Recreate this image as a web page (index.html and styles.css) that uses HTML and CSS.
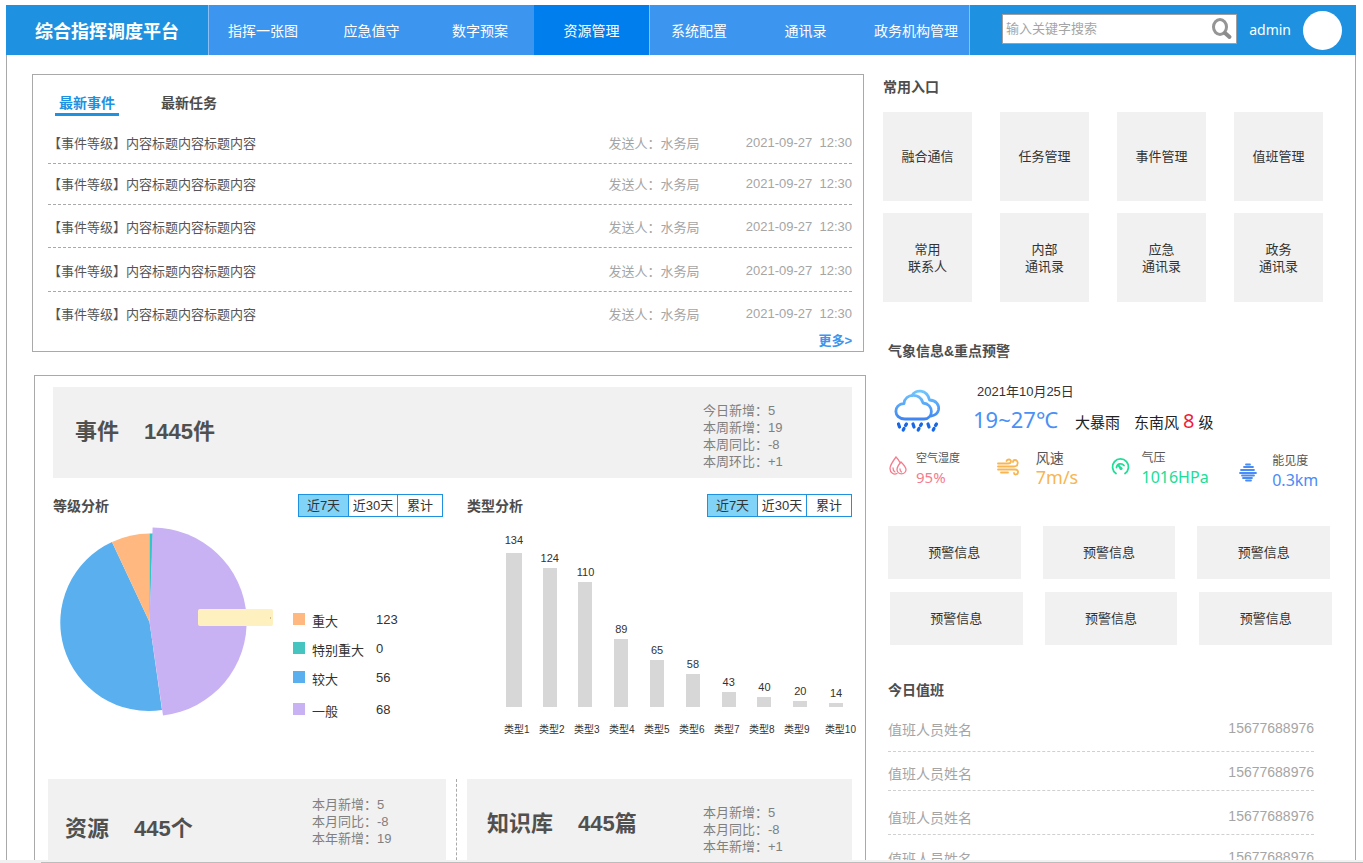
FILE: index.html
```html
<!DOCTYPE html>
<html lang="zh-CN">
<head>
<meta charset="utf-8">
<meta name="viewport" content="width=device-width, initial-scale=1">
<title>综合指挥调度平台</title>
<link rel="stylesheet" href="styles.css">
</head>
<body>
<div class="page">
  <header class="header">
    <h1 class="brand">综合指挥调度平台</h1>
    <nav class="nav">
      <a class="nav-item" href="#">指挥一张图</a>
      <a class="nav-item" href="#">应急值守</a>
      <a class="nav-item" href="#">数字预案</a>
      <a class="nav-item nav-item-active" href="#">资源管理</a>
      <a class="nav-item" href="#">系统配置</a>
      <a class="nav-item" href="#">通讯录</a>
      <a class="nav-item" href="#">政务机构管理</a>
    </nav>
    <div class="tools">
      <form class="search">
        <input class="search-input" type="text" placeholder="输入关键字搜索" aria-label="搜索">
        <button class="search-button" type="button" aria-label="搜索">
          <svg width="22" height="22" viewBox="0 0 22 22"><ellipse cx="9" cy="9" rx="6.500" ry="7.500" fill="none" stroke="#959595" stroke-width="3"/><path d="M14 15L18.500 19" stroke="#8c8c8c" stroke-width="4" stroke-linecap="round"/></svg>
        </button>
      </form>
      <span class="user">admin</span>
      <span class="avatar"></span>
    </div>
  </header>

  <main class="main">
    <div class="left">
      <section class="events">
        <div class="tabs">
          <button class="tab tab-active" type="button">最新事件</button>
          <button class="tab" type="button">最新任务</button>
        </div>
        <ul class="event-list">
          <li class="event"><span>【事件等级】内容标题内容标题内容</span><span class="muted">发送人：水务局</span><time class="event-time">2021-09-27  12:30</time></li>
          <li class="event"><span>【事件等级】内容标题内容标题内容</span><span class="muted">发送人：水务局</span><time class="event-time">2021-09-27  12:30</time></li>
          <li class="event"><span>【事件等级】内容标题内容标题内容</span><span class="muted">发送人：水务局</span><time class="event-time">2021-09-27  12:30</time></li>
          <li class="event"><span>【事件等级】内容标题内容标题内容</span><span class="muted">发送人：水务局</span><time class="event-time">2021-09-27  12:30</time></li>
          <li class="event"><span>【事件等级】内容标题内容标题内容</span><span class="muted">发送人：水务局</span><time class="event-time">2021-09-27  12:30</time></li>
        </ul>
        <a class="more" href="#">更多&gt;</a>
      </section>

      <section class="overview">
        <div class="summary summary-events">
          <h2 class="summary-title"><span>事件</span><span>1445件</span></h2>
          <ul class="stats">
            <li>今日新增：5</li><li>本周新增：19</li><li>本周同比：-8</li><li>本周环比：+1</li>
          </ul>
        </div>

        <div class="analysis">
          <section>
            <div class="analysis-head">
              <h3 class="heading">等级分析</h3>
              <div class="range">
                <button class="range-item range-item-active" type="button">近7天</button>
                <button class="range-item" type="button">近30天</button>
                <button class="range-item" type="button">累计</button>
              </div>
            </div>
            <div class="levels">
              <svg class="pie" width="222" height="200" viewBox="53 520 222 200">
                <path d="M149.500 622L162 710A88.500 88.500 0 0 1 112 542Z" fill="#5aafef"/>
                <path d="M149.500 622L112 542A88.500 88.500 0 0 1 149.500 533.500Z" fill="#ffb980"/>
                <path d="M149.500 622V533.500H153Z" fill="#2ec7c9"/>
                <path d="M149.500 622L152.600 527.500A94.300 94.300 0 0 1 163 715.500Z" fill="#c8b2f4"/>
                <rect x="198" y="609" width="75" height="17" rx="2" fill="#fff0c0"/>
                <path d="M270.500 617v2" stroke="#d0c090"/>
              </svg>
              <dl class="legend">
                <div class="legend-row"><dt class="level level-orange">重大</dt><dd>123</dd></div>
                <div class="legend-row"><dt class="level level-teal">特别重大</dt><dd>0</dd></div>
                <div class="legend-row"><dt class="level level-blue">较大</dt><dd>56</dd></div>
                <div class="legend-row"><dt class="level level-purple">一般</dt><dd>68</dd></div>
              </dl>
            </div>
          </section>

          <section>
            <div class="analysis-head">
              <h3 class="heading">类型分析</h3>
              <div class="range">
                <button class="range-item range-item-active" type="button">近7天</button>
                <button class="range-item" type="button">近30天</button>
                <button class="range-item" type="button">累计</button>
              </div>
            </div>
            <div class="bars">
              <div class="bar-col"><span>134</span><i class="bar" style="height:154px"></i></div>
              <div class="bar-col"><span>124</span><i class="bar" style="height:139px"></i></div>
              <div class="bar-col"><span>110</span><i class="bar" style="height:125px"></i></div>
              <div class="bar-col"><span>89</span><i class="bar" style="height:68px"></i></div>
              <div class="bar-col"><span>65</span><i class="bar" style="height:47px"></i></div>
              <div class="bar-col"><span>58</span><i class="bar" style="height:33px"></i></div>
              <div class="bar-col"><span>43</span><i class="bar" style="height:15px"></i></div>
              <div class="bar-col"><span>40</span><i class="bar" style="height:10px"></i></div>
              <div class="bar-col"><span>20</span><i class="bar" style="height:6px"></i></div>
              <div class="bar-col"><span>14</span><i class="bar" style="height:4px"></i></div>
            </div>
            <div class="axis">
              <span>类型1</span><span>类型2</span><span>类型3</span><span>类型4</span><span>类型5</span><span>类型6</span><span>类型7</span><span>类型8</span><span>类型9</span><span>类型10</span>
            </div>
          </section>
        </div>

        <div class="bottom">
          <div class="summary summary-resources">
            <h2 class="summary-title"><span>资源</span><span>445个</span></h2>
            <ul class="stats"><li>本月新增：5</li><li>本月同比：-8</li><li>本年新增：19</li></ul>
          </div>
          <div class="divider"></div>
          <div class="summary summary-knowledge">
            <h2 class="summary-title"><span>知识库</span><span>445篇</span></h2>
            <ul class="stats"><li>本月新增：5</li><li>本月同比：-8</li><li>本年新增：+1</li></ul>
          </div>
        </div>
      </section>
    </div>

    <aside class="right">
      <section>
        <h3 class="heading">常用入口</h3>
        <div class="tiles">
          <a class="tile" href="#">融合通信</a>
          <a class="tile" href="#">任务管理</a>
          <a class="tile" href="#">事件管理</a>
          <a class="tile" href="#">值班管理</a>
          <a class="tile" href="#">常用<br>联系人</a>
          <a class="tile" href="#">内部<br>通讯录</a>
          <a class="tile" href="#">应急<br>通讯录</a>
          <a class="tile" href="#">政务<br>通讯录</a>
        </div>
      </section>

      <section class="weather">
        <h3 class="heading">气象信息&amp;重点预警</h3>
        <div class="today">
          <svg width="50" height="52" viewBox="0 -2 50 52">
            <defs><linearGradient id="sky" gradientUnits="userSpaceOnUse" x1="0" y1="5" x2="0" y2="36"><stop offset="0" stop-color="#72c8ff"/><stop offset="1" stop-color="#3c82f2"/></linearGradient></defs>
            <g fill="none" stroke="url(#sky)" stroke-width="2.800" stroke-linejoin="round" stroke-linecap="round">
              <path d="M19 10.500C22 4 34 4 36.500 15C43 15 46.500 20 45.500 25C44.500 29 41 30.500 38.500 31"/>
              <path d="M12 34C0 34 0 19 11 18.500C12 8.500 27 7 30 18C41 19 41 34 31 34Z"/>
            </g>
            <path d="M5.500 39l1 3M13.500 39l-1 1.500M11 43.500l-.8 1.500M20 39l1 3M28.500 39l-1 1.500M26 43.500l-.8 1.500M35 39l1 3M43.500 39l-1 1.500M41 43.500l-.8 1.500" stroke="#1768e6" stroke-width="3.200" stroke-linecap="round"/>
          </svg>
          <div>
            <div class="date">2021年10月25日</div>
            <div class="condition"><span class="temp">19~27℃</span><span class="rain">大暴雨</span><span>东南风</span><b class="force">8</b><span>级</span></div>
          </div>
        </div>
        <div class="metrics">
          <div class="metric metric-humidity">
            <svg width="27" height="36" viewBox="0 0 27 36"><g fill="none" stroke="#f57c8d" stroke-width="1.300" stroke-linecap="round"><path d="M7 8C4 12 1 16 1 19.500C1 24 5 26 8 24.500M7 8C9 10 10 11.500 11 13.500"/><path d="M12 13C9 16.500 8 18.500 8 20.500C8 23 10 24.800 12.500 24.800S17 23 17 20.500C17 18.500 15 16 12 13Z"/><path d="M4 19q0 3 2 4M11 20q0 2 1.500 3"/></g></svg>
            <div><div class="metric-name">空气湿度</div><div class="metric-value">95%</div></div>
          </div>
          <div class="metric metric-wind">
            <svg width="39" height="36" viewBox="0 0 39 36"><g fill="none" stroke="#f8b551" stroke-width="1.800" stroke-linecap="round"><path d="M1 14.500h10C15 14.500 14.500 10.500 12 10.500Q10 10.500 9.500 12M1 17.500h16C22 17.500 21.500 11 18 11Q16 11 16 13M1 20.500h17C22.500 20.500 21.500 25.500 18.500 25.500Q17 25.500 17 24M4 23.500h7"/></g></svg>
            <div><div class="metric-name">风速</div><div class="metric-value">7m/s</div></div>
          </div>
          <div class="metric metric-pressure">
            <svg width="30" height="36" viewBox="0 0 30 36"><g fill="none" stroke="#20dd98" stroke-width="1.800" stroke-linecap="round"><path d="M5 24.500A8 8 0 1 1 14 24.500"/><path d="M5.500 18.500A4.200 4.200 0 0 1 13 16.500"/><path d="M7.500 16.500L10 19.500" stroke-width="2"/></g><circle cx="10" cy="19.500" r="1.600" fill="#20dd98"/></svg>
            <div><div class="metric-name">气压</div><div class="metric-value">1016HPa</div></div>
          </div>
          <div class="metric metric-visibility">
            <svg width="33" height="36" viewBox="0 0 33 36"><path d="M7 12.500h4M5 15h9M2 18h13M1 21h16M3 23.500h12M4 26h9M7 28.500h5" stroke="#4a8cf5" stroke-width="1.800" stroke-linecap="round"/></svg>
            <div><div class="metric-name">能见度</div><div class="metric-value">0.3km</div></div>
          </div>
        </div>
        <div class="warnings">
          <button class="warning" type="button">预警信息</button>
          <button class="warning" type="button">预警信息</button>
          <button class="warning" type="button">预警信息</button>
        </div>
        <div class="warnings warnings-second">
          <button class="warning" type="button">预警信息</button>
          <button class="warning" type="button">预警信息</button>
          <button class="warning" type="button">预警信息</button>
        </div>
      </section>

      <section class="duty">
        <h3 class="heading">今日值班</h3>
        <ul class="duty-list">
          <li class="duty-row"><span>值班人员姓名</span><span class="phone">15677688976</span></li>
          <li class="duty-row"><span>值班人员姓名</span><span class="phone">15677688976</span></li>
          <li class="duty-row"><span>值班人员姓名</span><span class="phone">15677688976</span></li>
          <li class="duty-row"><span>值班人员姓名</span><span class="phone">15677688976</span></li>
        </ul>
      </section>
    </aside>
  </main>
</div>
<div class="scroll-track"><div class="scroll-thumb"></div></div>
</body>
</html>
```
FILE: styles.css
```css
* {
  box-sizing: border-box;
}

body {
  margin: 0;
  height: 100vh;
  display: flex;
  flex-direction: column;
  background: #fff;
  color: #333;
  font: 13px/18px "Liberation Sans", "Noto Sans CJK SC", sans-serif;
}

h1, h2, h3, ul, dl, dd {
  margin: 0;
  padding: 0;
}

ul {
  list-style: none;
}

a {
  color: inherit;
  text-decoration: none;
}

button {
  padding: 0;
  border: 0;
  background: none;
  color: inherit;
  font: inherit;
  cursor: pointer;
}

svg {
  display: block;
  flex: none;
}

.page {
  flex: 1;
  min-height: 0;
  margin: 5px 7px 0 6px;
  display: flex;
  flex-direction: column;
}

/* Header */
.header {
  flex: none;
  height: 50px;
  display: grid;
  grid-template-columns: 202fr 762fr 386fr;
  background: #1e92e0;
  color: #fff;
}

.brand {
  display: flex;
  align-items: center;
  justify-content: center;
  padding-top: 4px;
  font-size: 18px;
  line-height: 24px;
}

.nav {
  display: grid;
  grid-template-columns: 108fr 109fr 108fr 116fr 98fr 115fr 106fr;
  border: solid #8cc0f2;
  border-width: 0 1px;
  background: #3c95ef;
}

.nav-item {
  display: flex;
  align-items: center;
  justify-content: center;
  padding-top: 2px;
  font-size: 14px;
}

.nav-item-active {
  border-right: 1px solid #8cc0f2;
  background: #007eee;
}

.tools {
  display: flex;
  align-items: center;
  gap: 12px;
  padding: 0 14px 0 32px;
}

.search {
  flex: 1;
  min-width: 0;
  height: 30px;
  display: flex;
  align-items: center;
  margin-bottom: 2px;
  border: 1px solid #a0a0a0;
  background: #fff;
}

.search-input {
  flex: 1;
  min-width: 0;
  padding: 0 3px;
  border: 0;
  outline: 0;
  background: none;
  font: inherit;
}

.search-input::placeholder {
  color: #a5a5a5;
}

.search-button {
  padding-right: 3px;
}

.user {
  font: 14px/20px "Noto Sans", sans-serif;
}

.avatar {
  width: 39px;
  height: 39px;
  border-radius: 50%;
  background: #fff;
}

/* Body grid */
.main {
  flex: 1;
  min-height: 0;
  display: grid;
  grid-template-columns: 834fr 449fr;
  align-items: start;
  gap: 17px;
  padding: 0 23px 0 25px;
  border: solid #a9a9a9;
  border-width: 0 1px;
  overflow: hidden auto;
  scrollbar-width: none;
}

.heading {
  color: #4d4d4d;
  font-size: 14px;
  line-height: 20px;
}

/* Latest events */
.left {
  padding-top: 19px;
}

.events {
  margin-right: 2px;
  padding: 18px 11px 1px 15px;
  border: 1px solid #a9a9a9;
  display: flex;
  flex-direction: column;
}

.tabs {
  display: flex;
  gap: 38px;
  padding-left: 7px;
}

.tab {
  padding: 0 4px;
  border-bottom: 3px solid transparent;
  color: #4d4d4d;
  font-size: 14px;
  font-weight: bold;
  line-height: 20px;
}

.tab-active {
  border-color: #1e92e0;
  color: #1e92e0;
}

.event-list {
  display: grid;
  grid-template-rows: 41px 41px 43px 44px 40px;
  margin-top: 7px;
}

.event {
  display: grid;
  grid-template-columns: 560fr 137fr auto;
  align-content: end;
  padding-bottom: 10px;
  border-bottom: 1px dashed #a9a9a9;
  color: #555;
}

.event:last-child {
  padding-bottom: 8px;
  border: 0;
}

.muted,
.event-time {
  color: #a5a5a5;
}

.event-time {
  white-space: pre;
  line-height: 16px;
}

.more {
  align-self: flex-end;
  color: #3c95ef;
  font-weight: bold;
}

/* Overview */
.overview {
  margin: 23px 0 0 2px;
  padding: 11px 13px 40px;
  border: 1px solid #a9a9a9;
}

.summary {
  display: grid;
  align-items: start;
  min-height: 91px;
  background: #f1f1f1;
}

.summary-title {
  display: flex;
  gap: 25px;
  color: #505050;
  font-size: 22px;
  line-height: 30px;
}

.stats {
  color: #808080;
  line-height: 17px;
}

.summary-events {
  grid-template-columns: 628fr 149fr;
  margin-left: 5px;
  padding: 15px 0 0 22px;
}

.summary-events .summary-title {
  padding-top: 15px;
}

.analysis {
  display: grid;
  grid-template-columns: 390fr 385fr;
  gap: 24px;
  margin: 16px 0 0 5px;
}

.analysis-head {
  display: flex;
  align-items: center;
  justify-content: space-between;
}

.range {
  display: flex;
  border: 1px solid #1e92e0;
}

.range-item {
  width: 49px;
  line-height: 21px;
}

.range-item:last-child {
  width: 45px;
}

.range-item + .range-item {
  border-left: 1px solid #1e92e0;
}

.range-item-active {
  background: #81d3f8;
}

.levels {
  display: flex;
  gap: 18px;
  margin-top: 3px;
}

.legend {
  display: grid;
  grid-template-rows: 29px 29px 32px 29px;
  align-content: start;
  padding-top: 91px;
}

.legend-row {
  display: grid;
  grid-template-columns: 83px 1fr;
}

.level {
  display: flex;
  gap: 7px;
  padding-top: 2px;
}

.level::before {
  content: "";
  width: 12px;
  height: 12px;
}

.level-orange::before { background: #ffb980; }
.level-teal::before { background: #46c4c0; }
.level-blue::before { background: #5aafef; }
.level-purple::before { background: #c8b2f4; }

.bars {
  height: 190px;
  display: grid;
  grid-template-columns: repeat(10, 1fr);
  margin: 0 -2px 0 29px;
}

.bar-col {
  display: flex;
  flex-direction: column;
  align-items: center;
  justify-content: flex-end;
  gap: 3px;
  font-size: 11px;
  line-height: 14px;
}

.bar-col:first-child {
  gap: 6px;
}

.bar {
  width: 14px;
  background: #d7d7d7;
}

.bar-col:first-child .bar {
  width: 16px;
}

.axis {
  display: grid;
  grid-template-columns: repeat(9, 35fr) 37fr;
  margin: 15px -4px 0 37px;
  font-size: 10px;
  line-height: 15px;
  white-space: nowrap;
}

.axis span:last-child {
  justify-self: end;
}

.bottom {
  display: grid;
  grid-template-columns: 398fr auto 385fr;
  margin-top: 42px;
}

.divider {
  margin: 0 10px;
  border-left: 1px dashed #a9a9a9;
}

.summary-resources {
  grid-template-columns: 247fr 134fr;
  padding: 17px 0 0 17px;
}

.summary-resources .summary-title {
  padding-top: 18px;
}

.summary-knowledge {
  grid-template-columns: 216fr 149fr;
  padding: 25px 0 0 20px;
}

.summary-knowledge .summary-title {
  padding-top: 5px;
}

/* Side column */
.right {
  padding-top: 22px;
}

.tiles {
  display: grid;
  grid-template-columns: repeat(4, 1fr);
  gap: 12px 28px;
  margin: 15px 9px 0 0;
}

.tile {
  height: 89px;
  display: flex;
  align-items: center;
  justify-content: center;
  background: #f1f1f1;
  line-height: 17px;
  text-align: center;
}

.weather {
  margin-top: 39px;
  padding-left: 5px;
}

.today {
  height: 66px;
  display: flex;
  gap: 30px;
  margin-top: 22px;
  padding-left: 5px;
}

.date {
  padding-left: 4px;
}

.condition {
  display: flex;
  align-items: baseline;
  margin-top: 4px;
  color: #222;
  font: 15px/28px "Noto Sans", "Noto Sans CJK SC", sans-serif;
}

.temp {
  width: 102px;
  color: #4a90f5;
  font-size: 22px;
}

.rain {
  margin-right: 14px;
}

.force {
  margin: 0 4px;
  color: #ee1c3c;
  font-size: 20px;
  font-weight: normal;
}

.metrics {
  display: grid;
  grid-template-columns: 108fr 115fr 128fr 93fr;
  padding-left: 1px;
}

.metric {
  display: flex;
}

.metric-name {
  color: #555;
  font-size: 12px;
  line-height: 18px;
}

.metric-value {
  font: 16px/20px "Noto Sans", "Noto Sans CJK SC", sans-serif;
}

.metric-humidity { color: #f57c8d; }
.metric-humidity .metric-name { font-size: 11px; }
.metric-humidity .metric-value { font-size: 15px; }
.metric-wind { color: #f8b551; }
.metric-wind .metric-name { font-size: 14px; }
.metric-wind .metric-value { font-size: 18px; }
.metric-pressure { color: #20dd98; }
.metric-visibility { padding-top: 3px; color: #4a8cf5; }

.warnings {
  display: grid;
  grid-template-columns: repeat(3, 1fr);
  gap: 22px;
  margin: 36px 2px 0 0;
}

.warnings-second {
  margin: 13px 0 0 2px;
}

.warning {
  height: 53px;
  background: #f1f1f1;
}

.duty {
  margin-top: 35px;
  padding: 0 18px 0 5px;
}

.duty-list {
  display: grid;
  grid-template-rows: 44px 39px 44px 44px;
  margin-top: 8px;
  color: #a5a5a5;
  font-size: 14px;
  line-height: 20px;
}

.duty-row {
  display: flex;
  align-items: flex-end;
  justify-content: space-between;
  padding-bottom: 6px;
  border-bottom: 1px dashed #d0d0d0;
}

.duty-row:first-child {
  padding-bottom: 11px;
}

.duty-row:last-child {
  padding-bottom: 9px;
}

.phone {
  line-height: 24px;
}

/* Horizontal scroll strip */
.scroll-track {
  flex: none;
  height: 3px;
  padding: 2px 0 0 41px;
  background: #f1f1f1;
}

.scroll-thumb {
  height: 1px;
  background: #bcbcbc;
}
```
